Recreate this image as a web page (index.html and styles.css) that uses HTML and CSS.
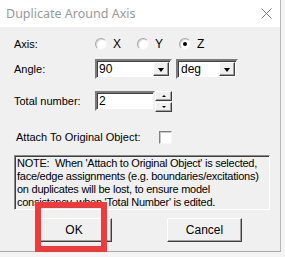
FILE: index.html
```html
<!DOCTYPE html>
<html>
<head>
<meta charset="utf-8">
<link rel="stylesheet" href="styles.css">
</head>
<body>
<div class="dialog">
  <div class="titlebar">
    <span class="title">Duplicate Around Axis</span>
    <svg class="close" width="11" height="11" viewBox="0 0 11 11"><path d="M0.5 0.5 L10.5 10.5 M10.5 0.5 L0.5 10.5" stroke="#7a7a7a" stroke-width="1" fill="none"/></svg>
  </div>
  <div class="content">
    <div class="row row-axis">
      <span class="label">Axis:</span>
      <div class="radios">
        <span class="radio-group"><span class="radio"></span><span class="rlabel">X</span></span>
        <span class="radio-group"><span class="radio"></span><span class="rlabel">Y</span></span>
        <span class="radio-group"><span class="radio checked"></span><span class="rlabel">Z</span></span>
      </div>
    </div>
    <div class="row row-angle">
      <span class="label">Angle:</span>
      <div class="combo combo-angle"><span class="ctext">90</span><span class="dbtn"><span class="tri"></span></span></div>
      <div class="combo combo-unit"><span class="ctext">deg</span><span class="dbtn"><span class="tri"></span></span></div>
    </div>
    <div class="row row-total">
      <span class="label">Total number:</span>
      <div class="spin-input"><span class="ctext">2</span></div>
      <div class="spin-btns">
        <span class="sbtn"><span class="tri-up"></span></span>
        <span class="sbtn"><span class="tri-small"></span></span>
      </div>
    </div>
    <div class="row row-check">
      <span class="label check-label">Attach To Original Object:</span>
      <span class="checkbox"></span>
    </div>
    <div class="note">NOTE:&nbsp; When 'Attach to Original Object' is selected,<br>face/edge assignments (e.g. boundaries/excitations)<br>on duplicates will be lost, to ensure model<br>consistency, when 'Total Number' is edited.</div>
    <div class="buttons">
      <button class="btn btn-ok">OK</button>
      <button class="btn btn-cancel">Cancel</button>
    </div>
  </div>
</div>
<div class="highlight"></div>
</body>
</html>
```
FILE: styles.css
```css
html, body {
  margin: 0;
  padding: 0;
}
body {
  width: 285px;
  height: 257px;
  background: #f4f4f4;
  position: relative;
  overflow: hidden;
  font-family: "Liberation Sans", Arial, sans-serif;
  font-size: 11px;
  color: #000;
}
.dialog {
  width: 280px;
  height: 251px;
  background: #f0f0f0;
  border-right: 1px solid #b8b8b8;
  border-bottom: 1px solid #a8a8a8;
  display: flex;
  flex-direction: column;
}
.titlebar {
  height: 27px;
  background: #fff;
  display: flex;
  align-items: center;
  justify-content: space-between;
  padding: 0 8px 0 6px;
  flex: none;
}
.title {
  font-family: "Noto Sans", "Open Sans", sans-serif;
  font-size: 12.5px;
  color: #999;
  margin-top: -1px;
}
.close {
  margin-top: -1px;
}
.content {
  padding: 7px 0 0 14px;
  display: flex;
  flex-direction: column;
}
.row {
  display: flex;
  align-items: center;
  height: 20px;
}
.label {
  width: 81px;
  flex: none;
}
.radios {
  display: flex;
}
.radio-group {
  width: 42px;
  display: flex;
  align-items: center;
}
.radio {
  width: 10px;
  height: 10px;
  border-radius: 50%;
  background: #fff;
  border: 1px solid;
  border-color: #a8a8a8 #f4f4f4 #f4f4f4 #a8a8a8;
  box-shadow: inset 1px 1px 0 #d8d8d8;
  position: relative;
  margin-right: 6px;
}
.radio.checked::after {
  content: "";
  position: absolute;
  left: 3px;
  top: 3px;
  width: 4px;
  height: 4px;
  border-radius: 50%;
  background: #000;
}
.rlabel {
  font-size: 12px;
}
.row-angle {
  margin-top: 5px;
}
.combo {
  height: 16px;
  background: #fff;
  border: 2px solid;
  border-color: #7a7a7a #f0f0f0 #f0f0f0 #7a7a7a;
  box-shadow: inset 1px 1px 0 #404040;
  display: flex;
  align-items: center;
  justify-content: space-between;
  padding: 0 0 0 2px;
  flex: none;
}
.combo-angle {
  width: 71px;
}
.combo-unit {
  width: 55px;
  margin-left: 4px;
  padding-left: 3px;
}
.ctext {
  font-size: 12px;
}
.dbtn {
  width: 14px;
  height: 12px;
  background: #f0f0f0;
  border: 1px solid;
  border-color: #fff #404040 #404040 #fff;
  box-shadow: inset -1px -1px 0 #a0a0a0;
  display: flex;
  align-items: center;
  justify-content: center;
  margin-right: 1px;
}
.tri {
  width: 0;
  height: 0;
  border-left: 3.5px solid transparent;
  border-right: 3.5px solid transparent;
  border-top: 4px solid #000;
  margin-top: 1px;
}
.row-total {
  margin-top: 12px;
}
.spin-input {
  width: 54px;
  height: 16px;
  background: #fff;
  border: 2px solid;
  border-color: #7a7a7a #f0f0f0 #f0f0f0 #7a7a7a;
  box-shadow: inset 1px 1px 0 #404040;
  display: flex;
  align-items: center;
  padding-left: 2px;
  flex: none;
}
.spin-btns {
  display: flex;
  flex-direction: column;
  gap: 1px;
}
.sbtn {
  width: 15px;
  height: 8px;
  background: #f0f0f0;
  border: 1px solid;
  border-color: #fff #404040 #404040 #fff;
  box-shadow: inset -1px -1px 0 #a0a0a0;
  display: flex;
  align-items: center;
  justify-content: center;
}
.tri-up {
  width: 0;
  height: 0;
  border-left: 2px solid transparent;
  border-right: 2px solid transparent;
  border-bottom: 2px solid #000;
}
.tri-small {
  width: 0;
  height: 0;
  border-left: 2px solid transparent;
  border-right: 2px solid transparent;
  border-top: 2px solid #000;
}
.row-check {
  margin-top: 16px;
}
.check-label {
  width: auto;
  margin-left: 2px;
  margin-right: 18px;
}
.checkbox {
  width: 11px;
  height: 11px;
  background: #fff;
  border: 1px solid;
  border-color: #808080 #f8f8f8 #f8f8f8 #808080;
  box-shadow: inset 1px 1px 0 #c8c8c8;
}
.note {
  margin-top: 8px;
  width: 252px;
  height: 52px;
  border: 1px solid;
  border-color: #8a8a8a #fff #fff #8a8a8a;
  box-shadow: inset 1px 1px 0 #404040;
  padding: 1px 0 0 2px;
  font-size: 11px;
  line-height: 13px;
  letter-spacing: -0.25px;
  overflow: hidden;
}
.buttons {
  margin-top: 8px;
  display: flex;
  padding-left: 22px;
}
.btn {
  width: 76px;
  height: 24px;
  margin: 0;
  padding: 0;
  background: #f0f0f0;
  border: 1px solid;
  border-color: #fff #404040 #404040 #fff;
  box-shadow: inset -1px -1px 0 #a0a0a0;
  font-family: "Liberation Sans", Arial, sans-serif;
  font-size: 12px;
  color: #000;
}
.btn-cancel {
  width: 75px;
  margin-left: 55px;
}
.highlight {
  position: absolute;
  left: 35px;
  top: 202px;
  width: 60px;
  height: 38px;
  border: 6px solid #ef3b3b;
}
```
